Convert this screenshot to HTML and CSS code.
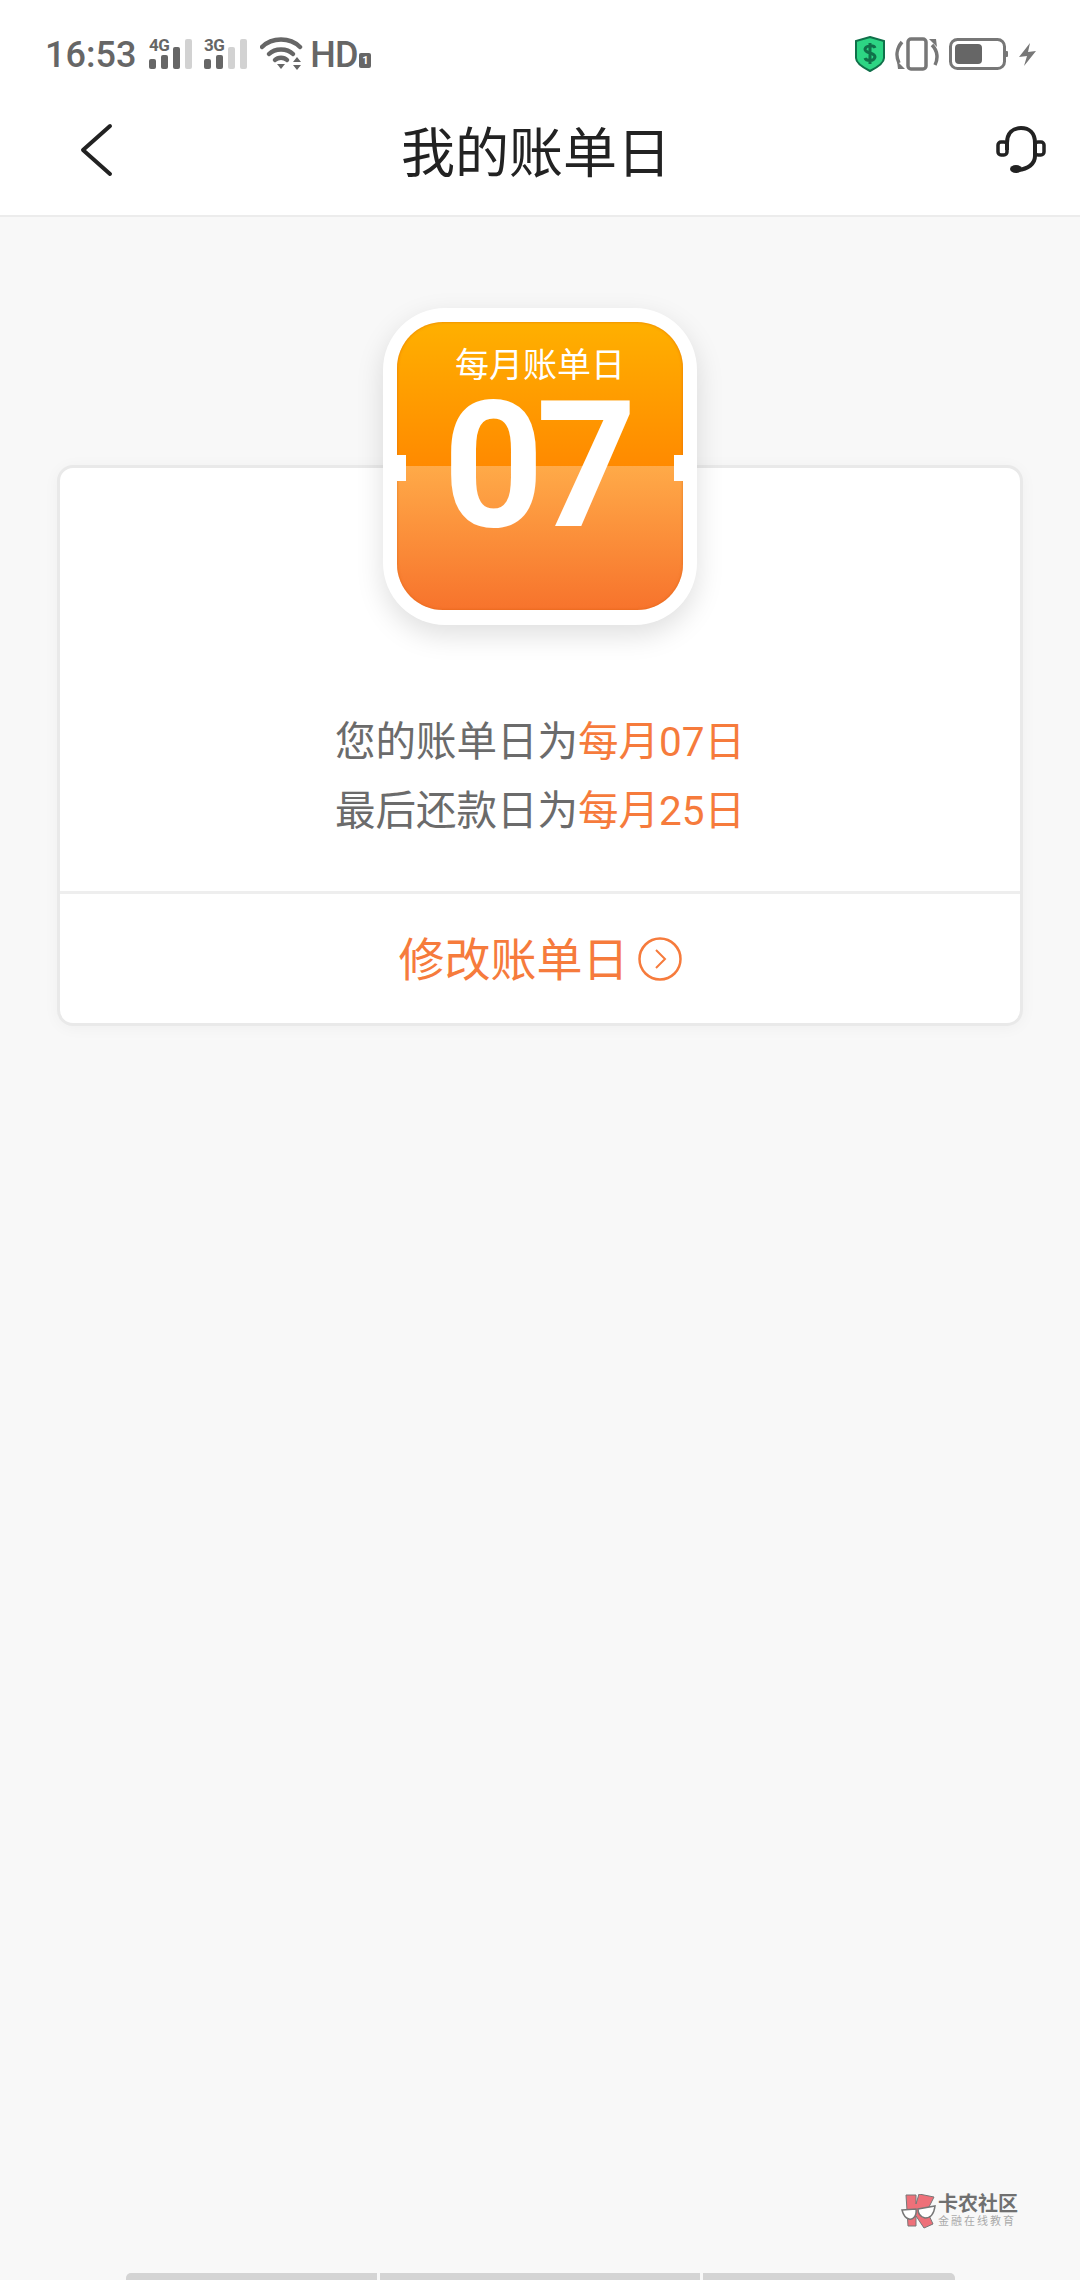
FILE: index.html
```html
<!DOCTYPE html>
<html lang="zh-CN">
<head>
    <meta charset="UTF-8">
    <meta name="viewport" content="width=device-width, initial-scale=1.0">
    <title>我的账单日</title>
    <link rel="stylesheet" href="styles.css">
</head>
<body>
    <div class="page">
        <header class="top">
            <div class="status-bar">
                <div class="status-left">
                    <span class="time">16:53</span>
                    <svg class="signal" width="44" height="32" viewBox="0 0 44 32">
                        <text x="0" y="13" class="net">4G</text>
                        <rect x="0" y="21" width="7" height="10" rx="2" fill="#666"/>
                        <rect x="12" y="17" width="7" height="14" rx="2" fill="#666"/>
                        <rect x="24" y="9" width="7" height="22" rx="2" fill="#666"/>
                        <rect x="36" y="1" width="7" height="30" rx="2" fill="#d2d2d2"/>
                    </svg>
                    <svg class="signal" width="44" height="32" viewBox="0 0 44 32">
                        <text x="0" y="13" class="net">3G</text>
                        <rect x="0" y="21" width="7" height="10" rx="2" fill="#666"/>
                        <rect x="12" y="17" width="7" height="14" rx="2" fill="#666"/>
                        <rect x="24" y="9" width="7" height="22" rx="2" fill="#d2d2d2"/>
                        <rect x="36" y="1" width="7" height="30" rx="2" fill="#d2d2d2"/>
                    </svg>
                    <svg class="wifi" width="43" height="34" viewBox="0 0 43 34">
                        <path d="M2 10 C12 0 30 0 40 10" fill="none" stroke="#666" stroke-width="4.5" stroke-linecap="round"/>
                        <path d="M9 17 C15 11 27 11 33 17" fill="none" stroke="#666" stroke-width="4.5" stroke-linecap="round"/>
                        <path d="M15 23 C18 20 24 20 27 23" fill="none" stroke="#666" stroke-width="4.5" stroke-linecap="round"/>
                        <path d="M17 27 H25 L21 32 Z" fill="#666"/>
                        <path d="M33 25 L37 20 L41 25 Z M33 28 H41 L37 33 Z" fill="#666"/>
                    </svg>
                    <span class="hd">HD</span>
                    <span class="sim">1</span>
                </div>
                <div class="status-right">
                    <svg width="30" height="36" viewBox="0 0 30 36">
                        <path d="M15 1 L29 5 V22 C29 27 21 32 15 35 C9 32 1 27 1 22 V5 Z" fill="#2dd584" stroke="#10704a" stroke-width="2"/>
                        <path d="M20 12 C19 9 11 9 10 13 C10 18 20 16 20 21 C19 26 11 25 10 22 M15 7 V28" fill="none" stroke="#10704a" stroke-width="3"/>
                    </svg>
                    <svg width="44" height="34" viewBox="0 0 44 34">
                        <rect x="13" y="2" width="18" height="30" rx="3" fill="none" stroke="#777" stroke-width="3.5"/>
                        <path d="M7 5 C1 12 1 20 4 26 M37 8 C43 14 43 22 40 28" fill="none" stroke="#777" stroke-width="3.5"/>
                        <path d="M2 24 L10 32 H3 Z M42 10 L34 2 H41 Z" fill="#777"/>
                    </svg>
                    <svg width="60" height="32" viewBox="0 0 60 32">
                        <rect x="1.5" y="1.5" width="54" height="29" rx="7" fill="none" stroke="#777" stroke-width="3"/>
                        <rect x="6" y="6" width="27" height="20" rx="4" fill="#666"/>
                        <rect x="56" y="13" width="3" height="6" rx="1" fill="#777"/>
                    </svg>
                    <svg width="17" height="23" viewBox="0 0 17 23">
                        <path d="M11 0 L0 14 L8 13 L5 23 L17 8 L9 9 Z" fill="#777"/>
                    </svg>
                </div>
            </div>
            <nav class="nav-bar">
                <div class="nav-left">
                    <svg width="34" height="54" viewBox="0 0 34 54">
                        <path d="M31 3 L4 27 L31 51" fill="none" stroke="#222" stroke-width="4" stroke-linecap="round" stroke-linejoin="round"/>
                    </svg>
                </div>
                <h1>我的账单日</h1>
                <div class="nav-right">
                    <svg width="50" height="48" viewBox="0 0 50 48">
                        <path d="M11 24 V17 C11 7 17 2 25 2 C33 2 39 7 39 17 V30 C39 38 32 43 22 44" fill="none" stroke="#222" stroke-width="4"/>
                        <rect x="2" y="16" width="9" height="13" rx="3" fill="none" stroke="#222" stroke-width="3.5"/>
                        <rect x="39" y="16" width="9" height="13" rx="3" fill="none" stroke="#222" stroke-width="3.5"/>
                        <ellipse cx="20" cy="43" rx="6" ry="4" fill="#222"/>
                    </svg>
                </div>
            </nav>
        </header>

        <main class="content">
            <div class="calendar">
                <div class="calendar-face">
                    <div class="calendar-label">每月账单日</div>
                    <div class="calendar-day">07</div>
                    <span class="notch notch-left"></span>
                    <span class="notch notch-right"></span>
                </div>
            </div>

            <section class="card">
                <div class="info">
                    <p>您的账单日为<span class="hl">每月07日</span></p>
                    <p>最后还款日为<span class="hl">每月25日</span></p>
                </div>
                <div class="action">
                    <span class="action-text">修改账单日</span>
                    <svg width="44" height="44" viewBox="0 0 44 44">
                        <circle cx="22" cy="22" r="20.5" fill="none" stroke="#f67b3c" stroke-width="2.5"/>
                        <path d="M18 13 L27 22 L18 31" fill="none" stroke="#f67b3c" stroke-width="2"/>
                    </svg>
                </div>
            </section>
        </main>

        <div class="watermark">
            <svg width="35" height="35" viewBox="0 0 35 35">
                <path d="M5 1 H15 V10 L18 0 L33 3 L26 17 L32 30 L23 34 L15 22 V32 H7 Z" fill="#ee7079" stroke="#777" stroke-width="1"/>
                <path d="M1 16 L15 15 C16 22 12 26 8 25 C4 24 2 20 1 16 Z M17 15 L34 12 C33 20 29 24 24 24 C20 23 17 20 17 15 Z" fill="#fff" stroke="#777" stroke-width="1.5"/>
            </svg>
            <div class="watermark-text">
                <div class="watermark-name">卡农社区</div>
                <div class="watermark-sub">金融在线教育</div>
            </div>
        </div>

        <div class="gesture-bar">
            <span class="gesture gesture-left"></span>
            <span class="gesture gesture-mid"></span>
            <span class="gesture gesture-right"></span>
        </div>
    </div>
</body>
</html>
```

FILE: styles.css
```css
* {
    box-sizing: border-box;
}
body {
    margin: 0;
    font-family: Roboto, "Noto Sans CJK SC", sans-serif;
    background-color: #f8f8f8;
    color: #666;
}
.page {
    width: 1080px;
    height: 2280px;
    display: flex;
    flex-direction: column;
    overflow: hidden;
}
.top {
    background-color: #fff;
    border-bottom: 2px solid #ececec;
    height: 217px;
}
.status-bar {
    height: 84px;
    padding: 24px 44px 0 45px;
    display: flex;
    justify-content: space-between;
    align-items: center;
}
.status-left,
.status-right {
    display: flex;
    align-items: center;
}
.time {
    font-size: 36px;
    font-weight: 500;
    margin: 2px 13px 0 0;
}
.signal {
    margin-right: 11px;
}
.net {
    font-family: Roboto, sans-serif;
    font-size: 17px;
    font-weight: 700;
    letter-spacing: -0.5px;
    fill: #666;
}
.wifi {
    margin-left: 1px;
}
.hd {
    font-size: 36px;
    font-weight: 500;
    margin: 2px 0 0 7px;
    letter-spacing: -1px;
}
.sim {
    width: 12px;
    height: 15px;
    margin: 13px 0 0 2px;
    border-radius: 2px;
    background-color: #666;
    color: #fff;
    font-size: 11px;
    font-weight: 700;
    line-height: 15px;
    text-align: center;
}
.status-right {
    gap: 10px;
}
.nav-bar {
    height: 131px;
    display: grid;
    grid-template-columns: 1fr auto 1fr;
    align-items: center;
}
.nav-left {
    padding-left: 79px;
    display: flex;
}
.nav-right {
    padding-right: 34px;
    display: flex;
    justify-content: flex-end;
}
.nav-bar h1 {
    margin: 0 8px 0 0;
    font-size: 54px;
    font-weight: 400;
    color: #222;
}
.content {
    flex: 1;
    padding: 91px 57px 0;
    display: flex;
    flex-direction: column;
    align-items: stretch;
}
.calendar {
    position: relative;
    z-index: 1;
    align-self: center;
    width: 314px;
    height: 317px;
    margin-bottom: -160px;
    padding: 14px;
    border-radius: 62px;
    background-color: #fff;
    box-shadow: 0 10px 28px rgba(0, 0, 0, 0.13);
}
.calendar-face {
    position: relative;
    height: 288px;
    border-radius: 46px;
    background: linear-gradient(#ffb000 0, #ff8a00 144px, #ffaa48 144px, #f7732c 100%);
    box-shadow: inset 0 0 3px rgba(210, 90, 0, 0.6);
    color: #fff;
    text-align: center;
}
.calendar-label {
    padding-top: 22px;
    font-size: 34px;
    line-height: 42px;
}
.calendar-day {
    margin-top: 15px;
    padding-right: 8px;
    font-size: 176px;
    font-weight: 700;
    line-height: 130px;
    letter-spacing: -8px;
}
.notch {
    position: absolute;
    top: 133px;
    width: 9px;
    height: 26px;
    background-color: #fff;
}
.notch-left {
    left: 0;
}
.notch-right {
    right: 0;
}
.card {
    background-color: #fff;
    border: 3px solid #e9e9e9;
    border-radius: 16px;
    box-shadow: 0 2px 16px rgba(0, 0, 0, 0.04);
}
.info {
    padding: 240px 0 45px;
    border-bottom: 3px solid #eee;
    text-align: center;
    font-size: 40.5px;
    line-height: 69px;
    color: #6b6b6b;
}
.info p {
    margin: 0;
}
.hl {
    color: #f67b3c;
}
.action {
    height: 129px;
    display: flex;
    justify-content: center;
    align-items: center;
    gap: 9px;
    font-size: 46px;
    color: #f67b3c;
}
.action-text {
    margin-top: -5px;
}
.watermark {
    align-self: flex-end;
    margin: 0 62px 44px 0;
    display: flex;
    align-items: center;
    gap: 2px;
}
.watermark-text {
    width: 80px;
}
.watermark-name {
    font-size: 20px;
    font-weight: 700;
    line-height: 22px;
    color: #707070;
}
.watermark-sub {
    font-size: 11px;
    line-height: 14px;
    letter-spacing: 2px;
    color: #aaa;
    white-space: nowrap;
}
.gesture-bar {
    height: 7px;
    padding-left: 126px;
    display: flex;
    gap: 3px;
}
.gesture {
    height: 7px;
    background-color: #d4d4d4;
}
.gesture-left {
    width: 251px;
    border-top-left-radius: 5px;
}
.gesture-mid {
    width: 320px;
}
.gesture-right {
    width: 252px;
    border-top-right-radius: 5px;
}
```
